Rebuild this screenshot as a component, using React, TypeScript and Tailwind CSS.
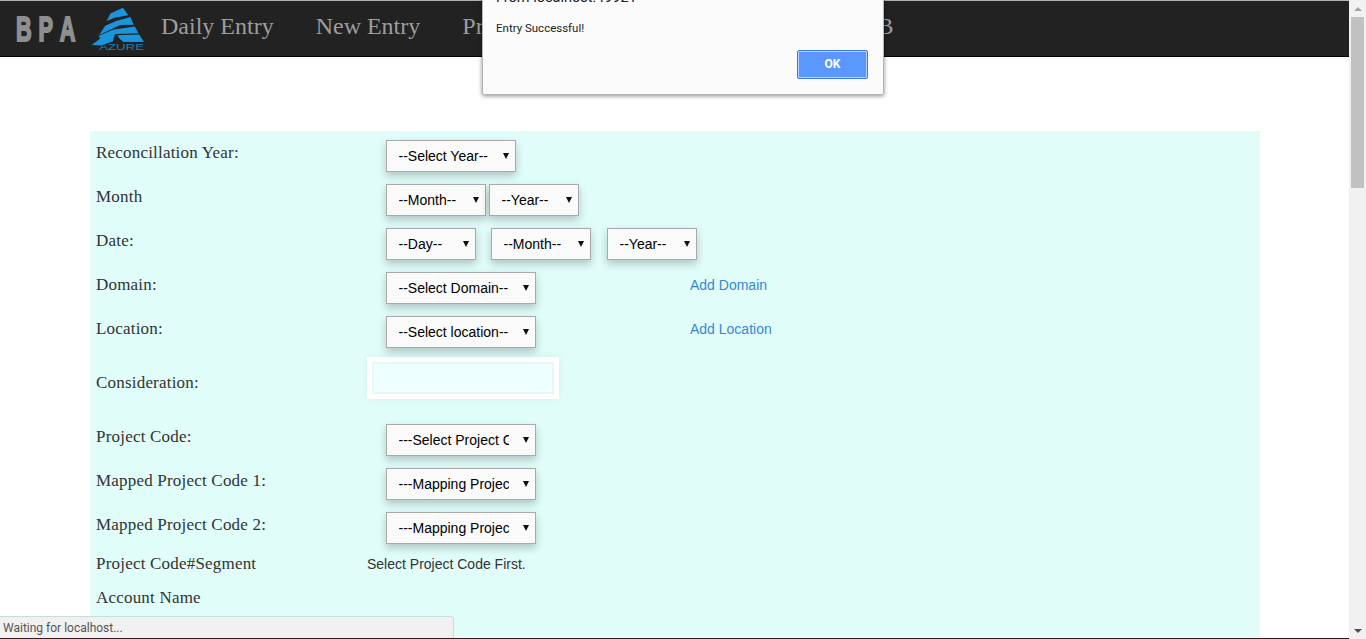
import React from 'react';

const navItems = ['Daily Entry', 'New Entry', 'Project Mapping', 'Reports'];

function Select({ width, label, className = '' }: { width: string; label: string; className?: string }) {
  return (
    <div className={`relative h-8 shrink-0 ${width} ${className}`}>
      <select
        defaultValue={label}
        className="h-full w-full appearance-none border border-[#a9a9a9] bg-[#fafafa] pl-[11.5px] pr-[26px] font-['Liberation_Sans',sans-serif] text-[14px] text-black shadow-[0_4px_8px_rgba(0,0,0,0.22)] outline-none"
      >
        <option>{label}</option>
      </select>
      <svg className="pointer-events-none absolute right-[7px] top-[13px]" width="6" height="6" viewBox="0 0 6 6">
        <polygon points="0,0 6,0 3,6" fill="#111" />
      </svg>
    </div>
  );
}

function Row({ label, children, link }: { label: string; children?: React.ReactNode; link?: string }) {
  return (
    <div className="flex h-11 pl-[6px]">
      <div className="w-[271px] shrink-0 pt-[10px] text-[17px] leading-[24px] tracking-[0.2px] text-[#333]">{label}</div>
      <div className="flex w-[323px] shrink-0 pl-[19px] pt-[9px]">{children}</div>
      {link && (
        <a className="pt-[12px] font-['Liberation_Sans',sans-serif] text-[14px] leading-[20px] text-[#3a87d0]">{link}</a>
      )}
    </div>
  );
}

function Logo() {
  return (
    <svg className="ml-[10px] mt-[1px] shrink-0" width="58" height="46" viewBox="270 18 171 135">
      <g fill="#1a94dc">
        <polygon points="333,40 370,23 386,45 345,52 322,62" />
        <polygon points="318,76 350,62 392,50 402,73 362,74 300,103" />
        <polygon points="298,106 340,88 405,78 416,98 350,100 310,122" />
        <polygon points="278,133 305,112 346,103 340,122 304,134" />
        <polygon points="353,104 418,102 432,124 372,124 361,115" />
      </g>
      <text x="300" y="147" textLength="132" lengthAdjust="spacingAndGlyphs" fontSize="25" fill="#1a7fb8" fontFamily="Liberation Sans, sans-serif">
        AZURE
      </text>
    </svg>
  );
}

export default function App() {
  return (
    <div className="relative flex h-[639px] w-full overflow-hidden bg-white font-['Liberation_Serif',serif]">
      <div className="flex min-w-0 flex-1 flex-col">
        <header className="flex h-[57px] shrink-0 items-center border-b border-t border-b-black border-t-[#b0b0b0] bg-[#222222]">
          <div className="ml-[16px] flex w-[63px] origin-left scale-x-[0.62] gap-[11px] whitespace-nowrap font-['Liberation_Sans',sans-serif] text-[35px] font-bold leading-none text-[#8f8f8f] [-webkit-text-stroke:2px_#8f8f8f]">
            <span>B</span>
            <span>P</span>
            <span>A</span>
          </div>
          <Logo />
          <nav className="mb-[6px] ml-[14px] flex gap-[42px] whitespace-nowrap text-[24px] leading-[30px] text-[#9d9d9d]">
            {navItems.map((item) => (
              <a key={item}>{item}</a>
            ))}
            <a className="ml-[2px]">Upload DB</a>
          </nav>
        </header>

        <main className="flex-1 pl-[90px] pr-[89px] pt-[74px]">
          <form className="h-full bg-[#e0fdf9]">
            <Row label="Reconcillation Year:">
              <Select width="w-[130px]" label="--Select Year--" />
            </Row>
            <Row label="Month">
              <Select width="w-[100px]" label="--Month--" />
              <Select width="w-[90px]" label="--Year--" className="ml-[3px]" />
            </Row>
            <Row label="Date:">
              <Select width="w-[90px]" label="--Day--" />
              <Select width="w-[100px]" label="--Month--" className="ml-[15px]" />
              <Select width="w-[90px]" label="--Year--" className="ml-4" />
            </Row>
            <Row label="Domain:" link="Add Domain">
              <Select width="w-[150px]" label="--Select Domain--" />
            </Row>
            <Row label="Location:" link="Add Location">
              <Select width="w-[150px]" label="--Select location--" />
            </Row>

            <div className="flex h-16 pl-[6px]">
              <div className="w-[271px] shrink-0 pt-[20px] text-[17px] leading-[24px] tracking-[0.2px] text-[#333]">Consideration:</div>
              <div className="mt-[6px] h-[42px] w-[192px] border-[5px] border-white bg-[#edfffe] shadow-[inset_0_0_0_2px_#e6f7f5,0_0_8px_rgba(0,0,0,0.06)]" />
            </div>

            <Row label="Project Code:">
              <Select width="w-[150px]" label="---Select Project Code---" />
            </Row>
            <Row label="Mapped Project Code 1:">
              <Select width="w-[150px]" label="---Mapping Project Code---" />
            </Row>
            <Row label="Mapped Project Code 2:">
              <Select width="w-[150px]" label="---Mapping Project Code---" />
            </Row>

            <div className="flex h-[34px] pl-[6px] pt-[5px] leading-[24px]">
              <div className="w-[271px] shrink-0 text-[17px] tracking-[0.2px] text-[#333]">Project Code#Segment</div>
              <div className="font-['Liberation_Sans',sans-serif] text-[14px] text-[#333]">Select Project Code First.</div>
            </div>
            <div className="pl-[6px] pt-[5px] text-[17px] leading-[24px] tracking-[0.2px] text-[#333]">Account Name</div>
          </form>
        </main>
        <div className="h-px shrink-0 bg-[#222]" />
      </div>

      {/* browser scrollbar */}
      <div className="flex w-[17px] shrink-0 flex-col items-center justify-between bg-[#f1f1f1] pb-[6px] pt-[7px]">
        <div className="flex w-full flex-col items-center">
          <svg width="8" height="4" viewBox="0 0 8 4">
            <polygon points="0,4 4,0 8,4" fill="#a3a3a3" />
          </svg>
          <div className="mt-[6px] h-[171px] w-[13px] bg-[#c1c1c1]" />
        </div>
        <svg width="8" height="4" viewBox="0 0 8 4">
          <polygon points="0,0 8,0 4,4" fill="#505050" />
        </svg>
      </div>

      {/* alert dialog */}
      <div className="absolute left-[482px] top-[-40px] h-[135px] w-[402px] rounded-[2px] border border-[#b5b5b5] bg-[#fbfbfb] font-['Roboto',sans-serif] shadow-[0_1px_4px_rgba(0,0,0,0.45)]">
        <p className="absolute left-[13px] top-[27px] text-[14.5px] leading-[20px] text-[#222]">From localhost:49921</p>
        <p className="absolute left-[13px] top-[58px] text-[11.5px] leading-[18px] text-[#222]">Entry Successful!</p>
        <button className="absolute left-[314px] top-[89px] h-[29px] w-[71px] rounded-[2px] border border-[#3b78e7] bg-[#5c97ff] pb-[2px] text-[12px] font-bold text-white shadow-[inset_0_0_0_1px_#bcd4ff]">
          OK
        </button>
      </div>

      {/* status bubble */}
      <div className="absolute bottom-px left-0 h-[22px] w-[454px] rounded-tr-[4px] border-r border-t border-[#c9dcdc] bg-[#f1f1f1] pl-[3px] font-['Roboto',sans-serif] text-[12px] leading-[22px] text-[#555]">
        Waiting for localhost...
      </div>
    </div>
  );
}
